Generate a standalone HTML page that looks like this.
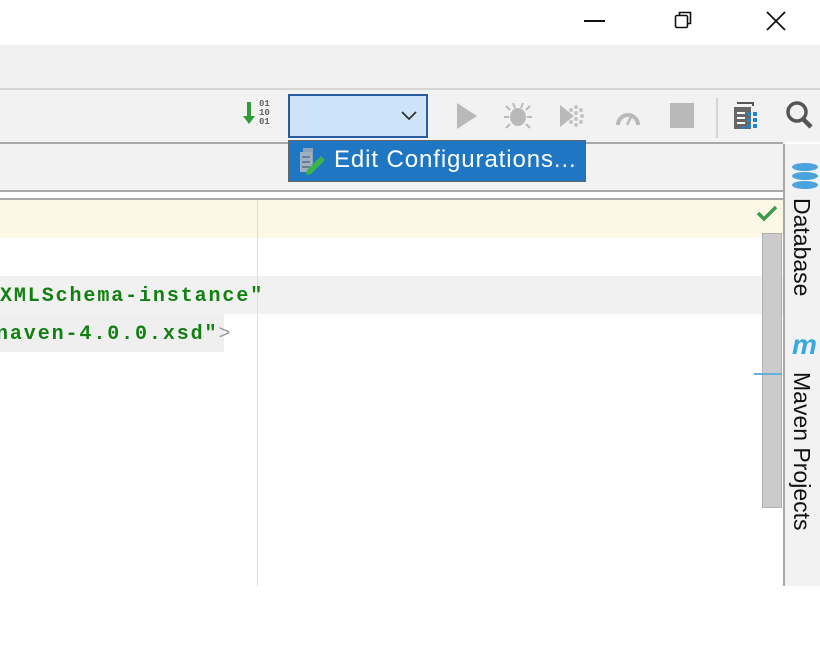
<!DOCTYPE html>
<html><head><meta charset="utf-8"><style>
*{margin:0;padding:0;box-sizing:border-box}
body{width:820px;height:586px;overflow:hidden;position:relative;background:#fff;font-family:"Liberation Sans",sans-serif}
.a{position:absolute}
.code{font-family:"Liberation Mono",monospace;font-weight:bold;color:#118011;font-size:20px;letter-spacing:1.9px;white-space:pre}
</style></head><body>
<div class="a" style="left:0;top:0;width:820px;height:45px;background:#fff"></div>
<div class="a" style="left:584px;top:20px;width:21px;height:2px;background:#111"></div>
<svg class="a" style="left:673px;top:9px" width="22" height="22"><rect x="2.5" y="6.5" width="12" height="12" rx="1.5" fill="none" stroke="#111" stroke-width="1.6"/><path d="M6.5 6.5V3.5h11v11h-3" fill="none" stroke="#111" stroke-width="1.6"/></svg>
<svg class="a" style="left:764px;top:9px" width="24" height="24"><path d="M3 3L21 21M21 3L3 21" stroke="#111" stroke-width="1.8"/></svg>
<div class="a" style="left:0;top:45px;width:820px;height:43px;background:#f0f0f0"></div>
<div class="a" style="left:0;top:88px;width:820px;height:2px;background:#d6d6d6"></div>
<div class="a" style="left:0;top:90px;width:820px;height:52px;background:#f2f2f2"></div>
<div class="a" style="left:0;top:142px;width:783px;height:2px;background:#a9a9a9"></div>
<svg class="a" style="left:243px;top:100px" width="32" height="32"><path d="M6 2v16" stroke="#2e9a3a" stroke-width="4"/><path d="M0 16h12l-6 8z" fill="#2e9a3a"/></svg>
<div class="a" style="left:259px;top:100px;font:bold 9px/9px 'Liberation Mono',monospace;color:#666">01<br>10<br>01</div>
<div class="a" style="left:288px;top:94px;width:140px;height:44px;background:#cde3f7;border:2px solid #2a5d9e"></div>
<svg class="a" style="left:400px;top:108px" width="18" height="14"><path d="M2 4l7 7 7-7" fill="none" stroke="#333" stroke-width="1.8"/></svg>
<svg class="a" style="left:455px;top:101px" width="24" height="30"><path d="M2 2L22 15 2 28z" fill="#b9b9b9"/></svg>
<svg class="a" style="left:503px;top:100px" width="32" height="32"><ellipse cx="15" cy="17" rx="8" ry="9" fill="#b9b9b9"/><path d="M7 10L3 6M23 10l4-4M6 17H1M24 17h5M7 24l-4 4M23 24l4 4M12 8l-2-5M18 8l2-5" stroke="#b9b9b9" stroke-width="2"/></svg>
<svg class="a" style="left:558px;top:101px" width="32" height="30"><path d="M2 4L16 15 2 26z" fill="#b9b9b9"/><g fill="#c4c4c4"><circle cx="18" cy="6" r="2"/><circle cx="23" cy="9" r="2"/><circle cx="18" cy="12" r="2"/><circle cx="24" cy="15" r="2"/><circle cx="18" cy="18" r="2"/><circle cx="23" cy="21" r="2"/><circle cx="18" cy="24" r="2"/><circle cx="13" cy="9" r="2"/><circle cx="13" cy="21" r="2"/></g></svg>
<svg class="a" style="left:614px;top:105px" width="28" height="22"><path d="M4 20A10 10 0 0 1 24 20" fill="none" stroke="#b9b9b9" stroke-width="4"/><path d="M13 20l5-10" stroke="#b9b9b9" stroke-width="2.5"/></svg>
<div class="a" style="left:670px;top:103px;width:24px;height:25px;background:#b9b9b9"></div>
<div class="a" style="left:716px;top:98px;width:2px;height:40px;background:#d4d4d4"></div>
<svg class="a" style="left:733px;top:100px" width="30" height="32"><path d="M4 3h16v3" fill="none" stroke="#555" stroke-width="2"/><rect x="1" y="7" width="17" height="22" fill="#666"/><g fill="#fff"><rect x="4" y="12" width="8" height="2"/><rect x="4" y="17" width="8" height="2"/><rect x="4" y="22" width="8" height="2"/></g><g fill="#2b7fc8"><rect x="14" y="12" width="4" height="4"/><rect x="20" y="12" width="4" height="4"/><rect x="14" y="18" width="4" height="4"/><rect x="20" y="18" width="4" height="4"/><rect x="14" y="24" width="4" height="4"/><rect x="20" y="24" width="4" height="4"/><rect x="8" y="26" width="4" height="3"/></g></svg>
<svg class="a" style="left:784px;top:100px" width="36" height="32"><circle cx="13" cy="12" r="9" fill="none" stroke="#555" stroke-width="3.5"/><path d="M19 19l8 8" stroke="#555" stroke-width="4.5"/></svg>
<div class="a" style="left:0;top:144px;width:783px;height:46px;background:#f2f2f2"></div>
<div class="a" style="left:0;top:190px;width:783px;height:2px;background:#a9a9a9"></div>
<div class="a" style="left:0;top:192px;width:783px;height:6px;background:#fff"></div>
<div class="a" style="left:0;top:198px;width:783px;height:2px;background:#a9a9a9"></div>
<div class="a" style="left:288px;top:140px;width:298px;height:42px;background:#1f77c4;border:1px solid #666"></div>
<svg class="a" style="left:297px;top:146px" width="30" height="30"><path d="M6 2h10v24H6z" fill="#8fa3b8"/><path d="M3 6h12v20H3z" fill="#9eb0c3"/><g fill="#6a7f96"><rect x="5" y="10" width="8" height="2"/><rect x="5" y="15" width="8" height="2"/><rect x="5" y="20" width="8" height="2"/></g><path d="M10 24l14-14 4 4-14 14-5 1z" fill="#3cb44a"/></svg>
<div class="a" style="left:334px;top:145px;color:#fff;font-size:24px;letter-spacing:0.9px;line-height:30px;white-space:nowrap">Edit Configurations...</div>
<div class="a" style="left:0;top:200px;width:783px;height:38px;background:#fdf8e5"></div>
<div class="a" style="left:0;top:276px;width:783px;height:38px;background:#f1f1f1"></div>
<div class="a" style="left:0;top:314px;width:224px;height:38px;background:#efefef"></div>
<div class="a" style="left:257px;top:200px;width:1px;height:386px;background:#dedede"></div>
<div class="a code" style="left:0;top:283px;line-height:28px">XMLSchema-instance"</div>
<div class="a code" style="left:-4px;top:321px;line-height:28px">naven-4.0.0.xsd"<span style="color:#999;font-weight:normal">&gt;</span></div>
<svg class="a" style="left:756px;top:204px" width="22" height="18"><path d="M2 9l6 6L20 3" fill="none" stroke="#3d9a4a" stroke-width="3.5"/></svg>
<div class="a" style="left:762px;top:233px;width:20px;height:275px;background:#cbcbcb;border:1px solid #b0b0b0"></div>
<div class="a" style="left:754px;top:373px;width:28px;height:2px;background:#6aaee0"></div>
<div class="a" style="left:783px;top:144px;width:37px;height:442px;background:#f2f2f2;border-left:2px solid #a9a9a9"></div>
<div class="a" style="left:783px;top:90px;width:2px;height:54px;background:#f2f2f2"></div>
<svg class="a" style="left:791px;top:162px" width="28" height="30"><g fill="#4aa3dc"><ellipse cx="14" cy="5" rx="13" ry="4"/><ellipse cx="14" cy="14" rx="13" ry="4"/><ellipse cx="14" cy="23" rx="13" ry="4"/></g></svg>
<div class="a" style="left:787px;top:198px;width:300px;transform-origin:0 0;transform:rotate(90deg) translate(0,-30px);font-size:23px;line-height:30px;color:#111;white-space:nowrap">Database</div>
<div class="a" style="left:792px;top:330px;font:italic bold 28px/30px 'Liberation Sans',sans-serif;color:#36a9e1">m</div>
<div class="a" style="left:787px;top:372px;width:300px;transform-origin:0 0;transform:rotate(90deg) translate(0,-30px);font-size:23px;line-height:30px;color:#111;white-space:nowrap">Maven Projects</div>
</body></html>
